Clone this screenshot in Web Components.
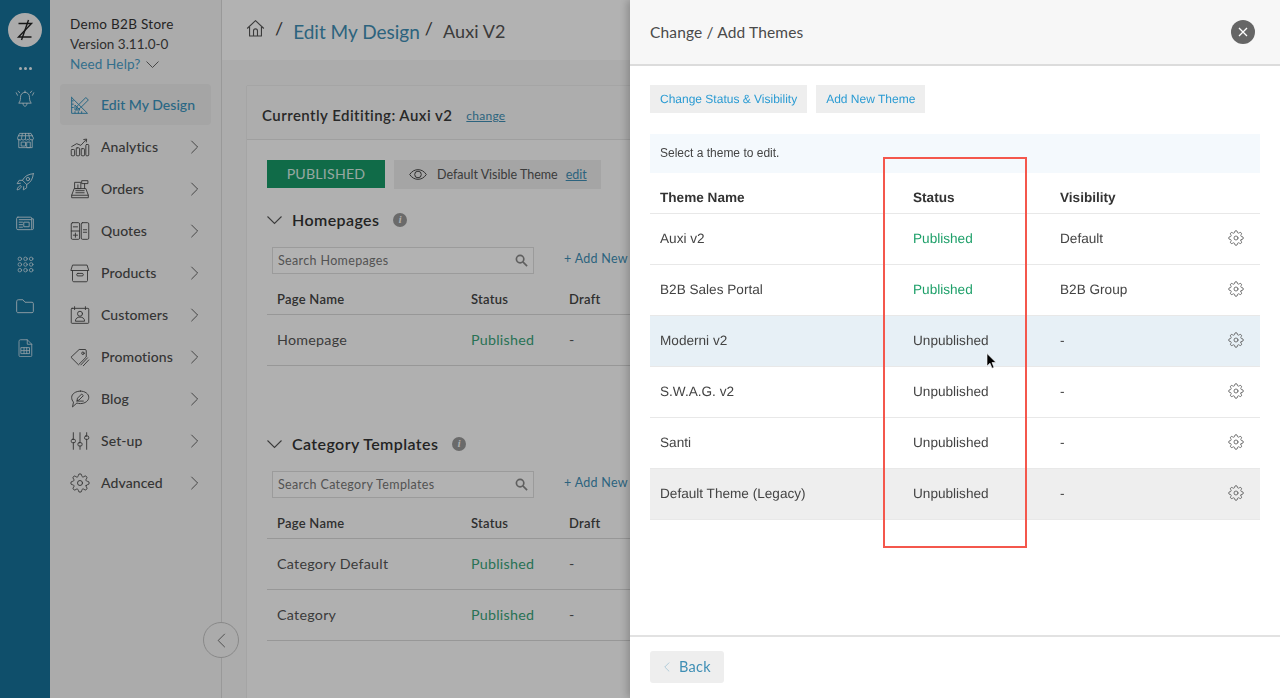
<!DOCTYPE html>
<html>
<head>
<meta charset="utf-8">
<title>Themes</title>
<style>
  html, body { margin: 0; height: 698px; overflow: hidden; background: #f7f7f7; }
  body { font-family: Lato, "Open Sans", sans-serif; color: #444; }
</style>
</head>
<body>
<zt-app></zt-app>
<zt-overlay>
  <zt-theme-panel></zt-theme-panel>
</zt-overlay>

<script>
const GEAR = `<circle cx="12" cy="12" r="3"/><path d="M19.4 15a1.65 1.65 0 0 0 .33 1.82l.06.06a2 2 0 0 1 0 2.83 2 2 0 0 1-2.83 0l-.06-.06a1.65 1.65 0 0 0-1.82-.33 1.65 1.65 0 0 0-1 1.51V21a2 2 0 0 1-2 2 2 2 0 0 1-2-2v-.09A1.65 1.65 0 0 0 9 19.4a1.65 1.65 0 0 0-1.82.33l-.06.06a2 2 0 0 1-2.83 0 2 2 0 0 1 0-2.83l.06-.06a1.65 1.65 0 0 0 .33-1.82 1.65 1.65 0 0 0-1.51-1H3a2 2 0 0 1-2-2 2 2 0 0 1 2-2h.09A1.65 1.65 0 0 0 4.6 9a1.65 1.65 0 0 0-.33-1.82l-.06-.06a2 2 0 0 1 0-2.83 2 2 0 0 1 2.83 0l.06.06a1.65 1.65 0 0 0 1.82.33H9a1.65 1.65 0 0 0 1-1.51V3a2 2 0 0 1 2-2 2 2 0 0 1 2 2v.09a1.65 1.65 0 0 0 1 1.51 1.65 1.65 0 0 0 1.82-.33l.06-.06a2 2 0 0 1 2.83 0 2 2 0 0 1 0 2.83l-.06.06a1.65 1.65 0 0 0-.33 1.82V9a1.65 1.65 0 0 0 1.51 1H21a2 2 0 0 1 2 2 2 2 0 0 1-2 2h-.09a1.65 1.65 0 0 0-1.51 1z"/>`;

const ICONS = {
  bell: `<path d="M12 4c-3.6 0-5.4 2.8-5.4 6 0 3.6-.8 5.6-2.2 7h15.2c-1.4-1.4-2.2-3.4-2.2-7 0-3.2-1.8-6-5.4-6z"/><path d="M12 4V2.4M9.6 17.2c0 2.2 1 3.4 2.4 3.4s2.4-1.2 2.4-3.4"/><path d="M3 7.5 1.5 4.5M5.5 4.5 4 2.5M21 7.5l1.5-3M18.5 4.5l1.5-2"/>`,
  store: `<path d="M3.5 11v10h17V11"/><path d="M5 3h14l3 6c0 3-3 3-3.3 1-.3 2-3.4 2-3.7 0-.3 2-3.7 2-4 0-.3 2-3.7 2-4 0-.3 2-3.4 2-3.7 0C4 12 2 12 2 9z"/><path d="M8 3 7 9.500M12 3v7M16 3l1 6.500M3 6h18"/><rect x="7" y="14" width="5" height="5"/><path d="M14 14h4v7h-4z"/>`,
  rocket: `<path d="M22 2c-6 .5-10.500 3-13 8l5 5c5-2.500 7.500-7 8-13z"/><circle cx="15.500" cy="8.500" r="2"/><path d="M9 10H5l-2.500 4 4-.5M14 15v4l-4 2.500.5-4"/><path d="M6.500 16.500c-2 .5-3.500 2-4 5 3-.5 4.500-2 5-4z"/>`,
  news: `<rect x="2" y="5" width="18" height="15" rx="1.500"/><path d="M20 7h2v12c0 .7-1 1-2 1"/><path d="M5 8h14"/><rect x="11" y="11" width="6" height="5.500"/><path d="M5 11h4M5 14h4M5 17h4"/>`,
  grid: `<circle cx="4" cy="4" r="2.500"/><circle cx="12" cy="4" r="2.500"/><circle cx="20" cy="4" r="2.500"/><circle cx="4" cy="12" r="2.500"/><circle cx="12" cy="12" r="2.500"/><circle cx="20" cy="12" r="2.500"/><circle cx="4" cy="20" r="2.500"/><circle cx="12" cy="20" r="2.500"/><circle cx="20" cy="20" r="2.500"/>`,
  folder: `<path d="M2 6.500C2 5 3 4.500 4 4.500h5.500L12 7.500h8.500c1 0 1.500.6 1.500 1.500v9.500c0 1-.6 1.500-1.500 1.500h-17C2.600 20 2 19.500 2 18.500z"/>`,
  sheet: `<path d="M4 3c0-1 .7-2 2-2h9l6 6v15c0 1-.7 1.500-1.500 1.500h-14C4.600 23.500 4 23 4 22z"/><path d="M15 1v6h6"/><rect x="7" y="11.500" width="11" height="8"/><path d="M7 15.500h11M10.700 11.500v8M14.300 11.500v8"/>`,
  design: `<path d="M2 3v19h19L2 3z"/><path d="M6 12.500V18h5.500z"/><path d="M2 7h2M2 11h2M2 15h2M6 22v-2M10 22v-2M14 22v-2"/><path d="M9 13 19 3l3 3-10 10-4 1z"/>`,
  analytics: `<rect x="1.500" y="15" width="4" height="7.500" rx="1"/><rect x="7.500" y="13" width="4" height="9.500" rx="1"/><rect x="13.500" y="14" width="4" height="8.500" rx="1"/><rect x="19" y="9" width="3.500" height="13.500" rx="1"/><path d="M2 11.500 8 8l5 2 6-6.500"/><path d="m16.500 3 3.500-.5-.5 3.500"/>`,
  orders: `<path d="M2 22v-2.500l3-8h14l3 8V22z"/><path d="M2 19.500h20"/><rect x="6" y="4" width="7" height="7.500"/><rect x="14.500" y="2" width="7" height="3.500"/><path d="M17.500 5.500v6M9.500 7v4.500M7 14h10M7 16.500h10"/>`,
  quotes: `<rect x="1.500" y="2" width="10" height="20" rx="1.500"/><rect x="13.500" y="2" width="9" height="20" rx="1.500"/><path d="M1.500 12h10"/><path d="M4 7h5M4 17h5M6.500 14.500v5M16 10.500h4M16 13.500h4"/>`,
  products: `<path d="M3.500 2.500h17l2 6.500H1.500z"/><path d="M3 9v12c0 .7.500 1.500 1.500 1.500h15c1 0 1.500-.8 1.500-1.500V9"/><rect x="8" y="12.500" width="8" height="3" rx="1.500"/>`,
  customers: `<rect x="1.500" y="4" width="21" height="18" rx="1"/><path d="M5.500 2v3.500M18.500 2v3.500"/><circle cx="12" cy="10.500" r="3"/><path d="M6.500 19c0-3 2.500-4.500 5.500-4.500s5.500 1.500 5.500 4.500z"/>`,
  promotions: `<path d="M1.500 12 11 3h7c1 0 1.500.6 1.500 1.500V12l-9 9z"/><circle cx="15.500" cy="7.500" r="1.500"/><path d="m13 21.500 8-8.500M16 22.500l6.500-7"/>`,
  blog: `<path d="M12.500 2.500c5.500 0 10 3.300 10 7.500s-4.500 7.500-10 7.500c-1.500 0-3-.2-4.200-.7L3 21.500l1.200-5.800C2.800 14.300 2 12.300 2 10c0-4.200 5-7.500 10.500-7.500z"/><path d="M8.500 13.500 9 11l5-5 2 2-5 5z"/><path d="M8 14.500h8"/>`,
  setup: `<path d="M4 2v8M4 14v8M12 2v12M12 18v4M20 2v4M20 10v12"/><rect x="1.500" y="10" width="5" height="4" rx="1.500"/><rect x="9.500" y="14" width="5" height="4" rx="1.500"/><rect x="17.500" y="6" width="5" height="4" rx="1.500"/>`,
  advanced: GEAR
};

function icon(name, size, sw) {
  return `<svg width="${size}" height="${size}" viewBox="0 0 24 24" fill="none" stroke="currentColor" stroke-width="${sw}" stroke-linecap="round" stroke-linejoin="round">${ICONS[name]}</svg>`;
}
const chevron = (d, w, h) => `<svg width="${w}" height="${h}" viewBox="0 0 10 18" fill="none" stroke="currentColor" stroke-width="1.1"><path d="${d}"/></svg>`;
const CH_RIGHT = "M1 1l8 8-8 8";
const CH_LEFT = "M9 1L1 9l8 8";

class ZtRail extends HTMLElement {
  connectedCallback() {
    const names = ["bell", "store", "rocket", "news", "grid", "folder", "sheet"];
    const sizes = { bell: 20, store: 19, rocket: 20, news: 20, grid: 17, folder: 20, sheet: 18 };
    this.attachShadow({mode: "open"}).innerHTML = `
      <style>
        :host { display: flex; flex-direction: column; align-items: center; width: 50px; flex: none; background: #16719a; color: #d4e6ee; }
        .logo { width: 34px; height: 34px; margin-top: 13px; border-radius: 50%; background: #f5f5f5; display: flex; align-items: center; justify-content: center; color: #222; }
        .dots { display: flex; gap: 2px; margin: 20px 0 8px; height: 3px; }
        .dots i { width: 3px; height: 3px; border-radius: 50%; background: #eef4f7; }
        .slot { height: 41.5px; display: flex; align-items: center; justify-content: center; }
        svg { display: block; }
      </style>
      <div class="logo">
        <svg width="20" height="22" viewBox="0 0 20 22" fill="none" stroke="currentColor" stroke-width="1.4"><path d="M3.500 4.500h13L3.500 18h13"/><path d="M13.500 1 6.500 21"/></svg>
      </div>
      <div class="dots"><i></i><i></i><i></i></div>
      ${names.map(n => `<div class="slot">${icon(n, sizes[n], 1.1)}</div>`).join("")}
    `;
  }
}
customElements.define("zt-rail", ZtRail);

class ZtNavItem extends HTMLElement {
  connectedCallback() {
    const active = this.hasAttribute("active");
    this.attachShadow({mode: "open"}).innerHTML = `
      <style>
        :host { display: flex; align-items: center; height: 42px; box-sizing: border-box; padding: 0 12px 0 10px; width: 151px; color: #4c4c4c; font-size: 14px; font-weight: 500; letter-spacing: .1px; }
        :host([active]) { color: #3b94be; height: 41px; margin-bottom: 1px; border-radius: 4px; background: #ececec; letter-spacing: .03px; }
        .ico { width: 20px; height: 20px; margin-right: 11px; }
        .txt { flex: 1; white-space: nowrap; margin-top: -1px; }
        svg { display: block; }
      </style>
      <div class="ico">${icon(this.getAttribute("icon"), 20, active ? 1.2 : 1.1)}</div>
      <div class="txt"><slot></slot></div>
      ${active ? "" : chevron(CH_RIGHT, 9, 14)}
    `;
  }
}
customElements.define("zt-nav-item", ZtNavItem);

class ZtSideNav extends HTMLElement {
  connectedCallback() {
    const items = [["analytics", "Analytics"], ["orders", "Orders"], ["quotes", "Quotes"], ["products", "Products"], ["customers", "Customers"], ["promotions", "Promotions"], ["blog", "Blog"], ["setup", "Set-up"], ["advanced", "Advanced"]];
    this.attachShadow({mode: "open"}).innerHTML = `
      <style>
        :host { display: block; position: relative; width: 172px; flex: none; box-sizing: border-box; background: #f5f5f5; border-right: 1px solid #dcdcdc; padding: 14px 0 0 10px; }
        .store { padding-left: 10px; margin-bottom: 9px; font-size: 13.500px; line-height: 20px; color: #444; }
        .store b { display: block; font-weight: 400; color: #333; letter-spacing: .3px; }
        .help { color: #4aa0c9; font-size: 13.500px; letter-spacing: .15px; line-height: 21px; display: flex; align-items: center; gap: 6px; }
        .collapse { position: absolute; right: -18px; top: 622px; width: 34px; height: 34px; border: 1px solid #c4c4c4; border-radius: 50%; background: #f5f5f5; color: #666; display: flex; align-items: center; justify-content: center; }
      </style>
      <div class="store">
        <b>Demo B2B Store</b>
        Version 3.11.0-0
        <div class="help">Need Help? <svg width="13" height="8" viewBox="0 0 13 8" fill="none" stroke="#666" stroke-width="1"><path d="M.500.500l6 6 6-6"/></svg></div>
      </div>
      <zt-nav-item icon="design" active>Edit My Design</zt-nav-item>
      ${items.map(i => `<zt-nav-item icon="${i[0]}">${i[1]}</zt-nav-item>`).join("")}
      <div class="collapse">${chevron(CH_LEFT, 9, 15)}</div>
    `;
  }
}
customElements.define("zt-side-nav", ZtSideNav);

class ZtBreadcrumb extends HTMLElement {
  connectedCallback() {
    this.attachShadow({mode: "open"}).innerHTML = `
      <style>
        :host { display: flex; align-items: center; height: 60px; box-sizing: border-box; padding: 2px 0 0 24px; background: #ffffff; color: #555; font-size: 19px; }
        svg { display: block; margin-top: -6px; }
        .sep { margin: -6px 10px 0 5px; font-size: 18px; color: #444; }
        a { color: #3f8fb5; font-size: 19px; }
        .cur { font-size: 18px; letter-spacing: .1px; color: #555; }
      </style>
      <svg width="19" height="19" viewBox="0 0 24 24" fill="none" stroke="#555" stroke-width="1.400" stroke-linejoin="round"><path d="M1.500 12 12 2l10.500 10"/><path d="M4.500 10v11.500h15V10"/><path d="M9.500 21.500v-6.500a2.500 2.500 0 0 1 5 0v6.500"/></svg>
      <span class="sep" style="margin-left:10px">/</span>
      <a>Edit My Design</a>
      <span class="sep">/</span>
      <span class="cur">Auxi V2</span>
    `;
  }
}
customElements.define("zt-breadcrumb", ZtBreadcrumb);

class ZtPageSection extends HTMLElement {
  connectedCallback() {
    const rows = JSON.parse(this.getAttribute("rows"));
    const title = this.getAttribute("heading");
    this.attachShadow({mode: "open"}).innerHTML = `
      <style>
        :host { display: block; margin-bottom: 66px; }
        .head { display: flex; align-items: center; height: 24px; box-sizing: border-box; padding-bottom: 2px; margin-bottom: 15px; font-size: 16px; font-weight: 600; color: #333; letter-spacing: .4px; }
        .head svg { margin-right: 10px; margin-top: 2px; }
        .info { width: 14px; height: 14px; margin: 2px 0 0 14px; border-radius: 50%; background: #999; color: #fff; font: italic 700 10px/14px "Liberation Serif", serif; text-align: center; }
        .tools { display: flex; align-items: center; height: 27px; padding-left: 5px; }
        .search { width: 262px; height: 27px; box-sizing: border-box; display: flex; align-items: center; justify-content: space-between; padding: 0 5px 0 5px; border: 1px solid #dedede; background: #fff; font-size: 12.500px; color: #777; letter-spacing: .35px; }
        .add { margin: -4px 0 0 30px; white-space: nowrap; color: #3f8fb5; font-size: 12.500px; letter-spacing: .3px; }
        .row { display: grid; grid-template-columns: 194px 98px 1fr; align-items: center; padding: 0 0 2px 10px; height: 48px; border-bottom: 1px solid #d8d8d8; font-size: 14.300px; letter-spacing: .25px; color: #555; }
        .row.top { height: 41px; box-sizing: border-box; padding: 10px 0 0 10px; font-size: 13px; font-weight: 600; color: #444; }
        .pub { color: #3aa47a; }
      </style>
      <div class="head">
        <svg width="15" height="9" viewBox="0 0 15 9" fill="none" stroke="#555" stroke-width="1.100"><path d="M.500.500l7 7 7-7"/></svg>
        ${title}
        <span class="info">i</span>
      </div>
      <div class="tools">
        <div class="search">Search ${title}
          <svg width="13" height="13" viewBox="0 0 14 14" fill="none" stroke="#888" stroke-width="1.800"><circle cx="5.500" cy="5.500" r="4"/><path d="M8.500 8.500l4.500 4.500"/></svg>
        </div>
        <div class="add">+ Add New</div>
      </div>
      <div class="row top"><span>Page Name</span><span>Status</span><span>Draft</span></div>
      ${rows.map(r => `<div class="row"><span>${r}</span><span class="pub">Published</span><span>-</span></div>`).join("")}
    `;
  }
}
customElements.define("zt-page-section", ZtPageSection);

class ZtDesignCard extends HTMLElement {
  connectedCallback() {
    this.attachShadow({mode: "open"}).innerHTML = `
      <style>
        :host { display: block; background: #fdfdfd; border: 1px solid #ececec; border-radius: 2px 2px 0 0; }
        .head { display: flex; align-items: center; height: 54px; box-sizing: border-box; padding: 5px 0 0 15px; background: #f8f8f8; border-bottom: 1px solid #e4e4e4; font-size: 15px; font-weight: 600; color: #3a3a3a; letter-spacing: .45px; }
        .head a { margin-left: 14px; font-size: 12px; font-weight: 400; letter-spacing: .25px; color: #3f8fb5; text-decoration: underline; }
        .body { padding: 20px 0 0 20px; }
        .status { display: flex; gap: 9px; margin-bottom: 19px; }
        .badge { width: 118px; height: 28px; background: #179a68; color: #d8f0e6; font-size: 14.200px; line-height: 28px; text-align: center; letter-spacing: .2px; }
        .vis { display: flex; align-items: center; width: 207px; height: 29px; box-sizing: border-box; padding-left: 15px; background: #ececec; color: #555; font-size: 12.500px; }
        .vis svg { margin-right: 10px; }
        .vis a { margin-left: 8px; color: #3f8fb5; text-decoration: underline; }
      </style>
      <div class="head">Currently Edititing: Auxi v2 <a>change</a></div>
      <div class="body">
        <div class="status">
          <div class="badge">PUBLISHED</div>
          <div class="vis">
            <svg width="18" height="11" viewBox="0 0 18 11" fill="none" stroke="#444" stroke-width="1"><path d="M.700 5.500C3 2 6 .700 9 .700s6 1.300 8.300 4.800C15 9 12 10.300 9 10.300S3 9 .700 5.500z"/><circle cx="9" cy="5.500" r="3.300"/></svg>
            Default Visible Theme <a>edit</a>
          </div>
        </div>
        <slot></slot>
      </div>
    `;
  }
}
customElements.define("zt-design-card", ZtDesignCard);

class ZtApp extends HTMLElement {
  connectedCallback() {
    this.attachShadow({mode: "open"}).innerHTML = `
      <style>
        :host { display: flex; height: 698px; overflow: hidden; }
        .main { flex: 1; min-width: 0; }
        .content { padding: 25px 24px 0 24px; }
      </style>
      <zt-rail></zt-rail>
      <zt-side-nav></zt-side-nav>
      <div class="main">
        <zt-breadcrumb></zt-breadcrumb>
        <div class="content">
          <zt-design-card>
            <zt-page-section heading="Homepages" rows='["Homepage"]'></zt-page-section>
            <zt-page-section heading="Category Templates" rows='["Category Default","Category"]'></zt-page-section>
          </zt-design-card>
        </div>
      </div>
    `;
  }
}
customElements.define("zt-app", ZtApp);

class ZtOverlay extends HTMLElement {
  constructor() {
    super();
    this.attachShadow({mode: "open"}).innerHTML = `
      <style>
        :host { position: fixed; inset: 0; display: flex; justify-content: flex-end; background: rgba(0,0,0,.3); }
      </style>
      <slot></slot>
    `;
  }
}
customElements.define("zt-overlay", ZtOverlay);

class ZtThemeRow extends HTMLElement {
  connectedCallback() {
    const status = this.getAttribute("status");
    this.attachShadow({mode: "open"}).innerHTML = `
      <style>
        :host { display: grid; grid-template-columns: 253px 147px 1fr 24px; align-items: center; height: 48px; padding: 0 8px 2px 10px; border-bottom: 1px solid #e8e8e8; font: 13.600px "Liberation Sans", Arial, sans-serif; text-rendering: geometricPrecision; color: #444; }
        :host([tone="hover"]) { background: #e7f0f6; }
        :host([tone="grey"]) { background: #eeeeee; }
        .pub { color: #1fa06a; }
        svg { display: block; color: #555; margin-top: -1px; }
      </style>
      <span><slot></slot></span>
      <span class="${status === "Published" ? "pub" : ""}">${status}</span>
      <span>${this.getAttribute("visibility")}</span>
      ${icon("advanced", 16, 1.2)}
    `;
  }
}
customElements.define("zt-theme-row", ZtThemeRow);

class ZtThemePanel extends HTMLElement {
  connectedCallback() {
    this.attachShadow({mode: "open"}).innerHTML = `
      <style>
        :host { position: relative; display: flex; flex-direction: column; width: 650px; height: 698px; background: #fff; box-shadow: -3px 0 8px rgba(0,0,0,.22); }
        .top { display: flex; align-items: center; justify-content: space-between; height: 66px; flex: none; box-sizing: border-box; padding: 0 25px 1px 20px; background: #f7f7f7; border-bottom: 2px solid #dcdcdc; font-size: 15.500px; color: #4a4a4a; letter-spacing: .15px; }
        .close { width: 24px; height: 24px; border-radius: 50%; background: #666; display: flex; align-items: center; justify-content: center; }
        .body { flex: 1; padding: 19px 20px 0; }
        .tabs { display: flex; gap: 9px; margin-bottom: 21px; }
        .tab { height: 28px; padding: 0 10px; background: #eeeeee; color: #2a9bd3; font: 12px/28px "Liberation Sans", Arial, sans-serif; text-rendering: geometricPrecision; }
        .note { height: 39px; padding-left: 10px; background: #f4f9fd; font: 12px/39px "Liberation Sans", Arial, sans-serif; color: #444; }
        .head { display: grid; grid-template-columns: 253px 147px 1fr; align-items: center; height: 41px; box-sizing: border-box; padding: 8px 12px 0 10px; border-bottom: 1px solid #e8e8e8; font: 700 13.600px "Liberation Sans", Arial, sans-serif; text-rendering: geometricPrecision; color: #333; }
        .foot { flex: none; height: 63px; box-sizing: border-box; border-top: 2px solid #e2e2e2; padding: 14px 20px 0; }
        .back { display: flex; align-items: center; gap: 9px; width: 74px; height: 32px; box-sizing: border-box; padding: 0 0 2px 14px; border-radius: 3px; background: #eeeeee; color: #3f8fb5; font-size: 14.500px; letter-spacing: .3px; }
        .back svg { color: #8ab6cc; margin-top: 2px; }
        .mark { position: absolute; left: 253px; top: 157px; width: 144px; height: 391px; box-sizing: border-box; border: 2px solid #f4574c; pointer-events: none; }
        .cursor { position: absolute; left: 356px; top: 353px; }
      </style>
      <div class="top">
        Change / Add Themes
        <div class="close"><svg width="10" height="10" viewBox="0 0 10 10" stroke="#fff" stroke-width="1.300"><path d="M1 1l8 8M9 1L1 9"/></svg></div>
      </div>
      <div class="body">
        <div class="tabs"><div class="tab">Change Status &amp; Visibility</div><div class="tab">Add New Theme</div></div>
        <div class="note">Select a theme to edit.</div>
        <div class="head"><span>Theme Name</span><span>Status</span><span>Visibility</span></div>
        <zt-theme-row status="Published" visibility="Default">Auxi v2</zt-theme-row>
        <zt-theme-row status="Published" visibility="B2B Group">B2B Sales Portal</zt-theme-row>
        <zt-theme-row status="Unpublished" visibility="-" tone="hover">Moderni v2</zt-theme-row>
        <zt-theme-row status="Unpublished" visibility="-">S.W.A.G. v2</zt-theme-row>
        <zt-theme-row status="Unpublished" visibility="-">Santi</zt-theme-row>
        <zt-theme-row status="Unpublished" visibility="-" tone="grey">Default Theme (Legacy)</zt-theme-row>
      </div>
      <div class="foot"><div class="back">${chevron(CH_LEFT, 6, 10)}Back</div></div>
      <div class="mark"></div>
      <svg class="cursor" width="11" height="17" viewBox="0 0 11 17"><path d="M1 .500v12.500l3-2.800 2 5 2-.8-2-4.900h4z" fill="#000" stroke="#fff" stroke-width=".6"/></svg>
    `;
  }
}
customElements.define("zt-theme-panel", ZtThemePanel);
</script>
</body>
</html>
